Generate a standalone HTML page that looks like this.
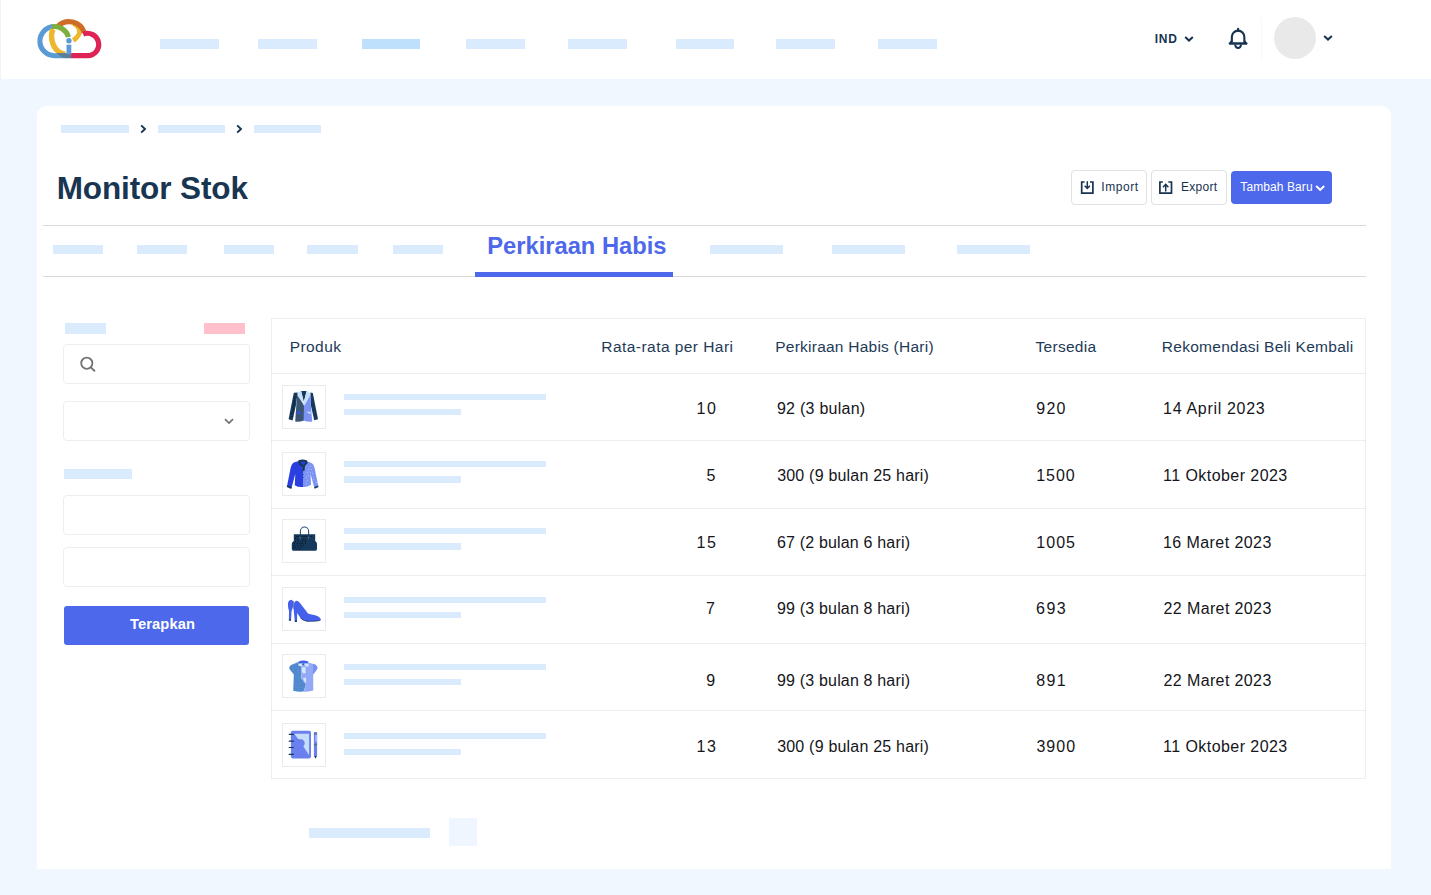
<!DOCTYPE html>
<html lang="id"><head><meta charset="utf-8"><title>Monitor Stok</title>
<style>
*{box-sizing:border-box;margin:0;padding:0}
html,body{width:1431px;height:895px;overflow:hidden}
body{background:#f0f7ff;font-family:"Liberation Sans",sans-serif;position:relative;color:#14141a}
.b{position:absolute}
.t{position:absolute;white-space:nowrap;line-height:1}
#hdr{position:absolute;left:0;top:0;width:1431px;height:79px;background:#fff;border-left:1px solid #f3f3f3}
#card{position:absolute;left:37px;top:106px;width:1354px;height:763px;background:#fff;border-radius:9px 9px 0 0}
.hl{position:absolute;height:1px;background:#d9d9d9}
.inp{position:absolute;border:1px solid #eeeeee;border-radius:4px;background:#fff}
.btn{position:absolute;border:1px solid #dfe1e4;border-radius:4px;background:#fff}
.th{color:#1d3a57;font-size:16px}
.td{color:#15151a;font-size:16px}
.thumb{position:absolute;width:44px;height:44px;border:1px solid #ebebeb;background:#fff}
.thumb svg{position:absolute;left:-1px;top:-1px}
</style></head><body>
<div id="hdr"></div>

<svg class="b" style="left:30px;top:10px" width="80" height="60" viewBox="0 0 80 60">
<g fill="none" stroke-width="5.1">
<path d="M22.72 16.61 A14.6 14.6 0 0 0 24.50 45.70 H36" stroke="#5b9bd5"/>
<path d="M22.9 19.2 C20.4 25 21 35 28 41.3 C30 43 32.5 44 36 44.4" stroke="#ecb72c" stroke-width="5.4"/>
<path d="M43.2 30.6 C47 28 50.6 23.5 49.3 19.5 C48.6 17.3 47 15.3 43.5 13.2" stroke="#ecb72c" stroke-width="4.9"/>
<path d="M27.59 16.59 A16.0 16.0 0 0 1 54.23 22.49" stroke="#cf6d28"/>
<path d="M21.96 16.72 A14.6 14.6 0 0 1 38.53 27.08" stroke="#7daf3f"/>
<path d="M53.12 24.19 A11.2 11.2 0 1 1 57.5 45.7 H41" stroke="#de2455" stroke-width="5.2"/>
</g>
<path d="M26 43.1 H41.3 V48.3 H36 L31.9 47.3 Z" fill="#5e7d99"/>
<circle cx="38.9" cy="30.8" r="3.8" fill="#fff"/>
<rect x="35.5" y="33.7" width="6.8" height="9.4" fill="#fff"/>
<circle cx="38.9" cy="30.8" r="2.7" fill="#5b9bd5"/>
<rect x="36.5" y="34.7" width="4.8" height="9.5" fill="#5b9bd5"/>
</svg>
<div class="b" style="left:160px;top:39px;width:58.8px;height:10.4px;background:#d9ebfd"></div>
<div class="b" style="left:258px;top:39px;width:58.8px;height:10.4px;background:#d9ebfd"></div>
<div class="b" style="left:361.5px;top:39px;width:58.8px;height:10.4px;background:#bfe0fc"></div>
<div class="b" style="left:466px;top:39px;width:58.8px;height:10.4px;background:#d9ebfd"></div>
<div class="b" style="left:568px;top:39px;width:58.8px;height:10.4px;background:#d9ebfd"></div>
<div class="b" style="left:675.5px;top:39px;width:58.8px;height:10.4px;background:#d9ebfd"></div>
<div class="b" style="left:776px;top:39px;width:58.8px;height:10.4px;background:#d9ebfd"></div>
<div class="b" style="left:878px;top:39px;width:58.8px;height:10.4px;background:#d9ebfd"></div>
<div class="t" style="left:1154.75px;top:33.00px;font-size:12px;font-weight:700;color:#173350;letter-spacing:0.712px">IND</div>
<svg class="b" style="left:1183px;top:34px" width="12" height="10" viewBox="0 0 12 10"><path d="M2.2 3 L6 6.6 L9.8 3" fill="none" stroke="#173350" stroke-width="2"/></svg>
<svg class="b" style="left:1226px;top:26px" width="24" height="26" viewBox="0 0 24 26"><g fill="none" stroke="#173350"><path d="M5.85 16.8 V10.9 A6.25 6.25 0 0 1 18.35 10.9 V16.8" stroke-width="2.1"/><path d="M5.6 15 L4.2 17.2 M18.6 15 L20 17.2" stroke-width="1.8"/><path d="M3.9 17.5 H20.3" stroke-width="2.4" stroke-linecap="round"/><path d="M12.1 2.9 V4.8" stroke-width="2.2" stroke-linecap="round"/><path d="M9.2 18.6 A2.9 3.4 0 0 0 15 18.6" stroke-width="2"/></g></svg>
<div class="b" style="left:1261px;top:18px;width:1px;height:42px;background:#f8f8f8"></div>
<div class="b" style="left:1274px;top:17px;width:42px;height:42px;border-radius:50%;background:#e9e9e9"></div>
<svg class="b" style="left:1322px;top:33px" width="12" height="10" viewBox="0 0 12 10"><path d="M2.2 3 L6 6.6 L9.8 3" fill="none" stroke="#173350" stroke-width="2"/></svg>
<div id="card"></div>
<div class="b" style="left:61px;top:124.7px;width:68px;height:8.5px;background:#d9ebfd"></div>
<div class="b" style="left:158px;top:124.7px;width:67px;height:8.5px;background:#d9ebfd"></div>
<div class="b" style="left:254px;top:124.7px;width:67px;height:8.5px;background:#d9ebfd"></div>
<svg class="b" style="left:139px;top:123px" width="9" height="12" viewBox="0 0 9 12"><path d="M2.2 2.4 L6 6 L2.2 9.6" fill="none" stroke="#173350" stroke-width="1.9"/></svg>
<svg class="b" style="left:235px;top:123px" width="9" height="12" viewBox="0 0 9 12"><path d="M2.2 2.4 L6 6 L2.2 9.6" fill="none" stroke="#173350" stroke-width="1.9"/></svg>
<div class="t" style="left:56.67px;top:173.00px;font-size:31.5px;font-weight:700;color:#183551;letter-spacing:-0.107px">Monitor Stok</div>
<div class="btn" style="left:1071px;top:170px;width:76px;height:35px"></div>
<div class="btn" style="left:1151px;top:170px;width:76px;height:35px"></div>
<div class="b" style="left:1231.3px;top:170.5px;width:100.7px;height:33.7px;border-radius:4px;background:#4d68eb"></div>
<svg class="b" style="left:1079px;top:179px" width="16" height="16" viewBox="0 0 16 16"><path d="M5.6 3 H2.7 V14.1 H13.9 V3 H11" fill="none" stroke="#173350" stroke-width="1.7"/><path d="M8.3 2.2 V9.4 M5.7 6.7 L8.3 9.4 L10.9 6.7" fill="none" stroke="#173350" stroke-width="1.5"/></svg>
<div class="t" style="left:1101.28px;top:181.00px;font-size:12px;color:#173350;letter-spacing:0.550px">Import</div>
<svg class="b" style="left:1158px;top:179px" width="16" height="16" viewBox="0 0 16 16"><path d="M4.8 3 H1.9 V14.2 H13.5 V3 H10.4" fill="none" stroke="#173350" stroke-width="1.7"/><path d="M7.7 12.6 V5.2 M5 8.2 L7.7 5.3 L10.4 8.2" fill="none" stroke="#173350" stroke-width="1.5"/></svg>
<div class="t" style="left:1180.90px;top:181.00px;font-size:12px;color:#173350;letter-spacing:0.315px">Export</div>
<div class="t" style="left:1240.35px;top:181.00px;font-size:12px;color:#fff;letter-spacing:0.085px">Tambah Baru</div>
<svg class="b" style="left:1314px;top:182.6px" width="12" height="10" viewBox="0 0 12 10"><path d="M2.2 3 L6.2 6.9 L10.2 3" fill="none" stroke="#fff" stroke-width="2"/></svg>
<div class="hl" style="left:43px;top:225px;width:1323px"></div>
<div class="hl" style="left:43px;top:276px;width:1323px"></div>
<div class="b" style="left:53px;top:245px;width:50px;height:9px;background:#d9ebfd"></div>
<div class="b" style="left:137px;top:245px;width:50px;height:9px;background:#d9ebfd"></div>
<div class="b" style="left:224px;top:245px;width:50px;height:9px;background:#d9ebfd"></div>
<div class="b" style="left:307px;top:245px;width:51px;height:9px;background:#d9ebfd"></div>
<div class="b" style="left:393px;top:245px;width:50px;height:9px;background:#d9ebfd"></div>
<div class="b" style="left:710px;top:245px;width:73px;height:9px;background:#d9ebfd"></div>
<div class="b" style="left:832px;top:245px;width:73px;height:9px;background:#d9ebfd"></div>
<div class="b" style="left:957px;top:245px;width:73px;height:9px;background:#d9ebfd"></div>
<div class="t" style="left:487.27px;top:235.00px;font-size:23.7px;font-weight:700;color:#4d68eb;letter-spacing:0.007px">Perkiraan Habis</div>
<div class="b" style="left:475px;top:272.4px;width:198px;height:4.4px;background:#4d68eb"></div>
<div class="b" style="left:65px;top:323px;width:41px;height:11px;background:#d9ebfd"></div>
<div class="b" style="left:204px;top:323px;width:41px;height:11px;background:#ffc0cb"></div>
<div class="inp" style="left:63px;top:344px;width:187px;height:40px"></div>
<svg class="b" style="left:78px;top:354px" width="20" height="20" viewBox="0 0 20 20"><circle cx="8.8" cy="9.2" r="5.6" fill="none" stroke="#707274" stroke-width="1.8"/><path d="M12.8 13.4 L16.4 16.8" stroke="#707274" stroke-width="1.9" stroke-linecap="round"/></svg>
<div class="inp" style="left:63px;top:401px;width:187px;height:40px"></div>
<svg class="b" style="left:222px;top:415px" width="14" height="12" viewBox="0 0 14 12"><path d="M3 4.2 L7 8 L11 4.2" fill="none" stroke="#707274" stroke-width="1.7"/></svg>
<div class="b" style="left:64px;top:469px;width:67.5px;height:10px;background:#d9ebfd"></div>
<div class="inp" style="left:63px;top:495px;width:187px;height:39.5px"></div>
<div class="inp" style="left:63px;top:547px;width:187px;height:39.5px"></div>
<div class="b" style="left:64px;top:606px;width:185px;height:39px;border-radius:3px;background:#4d68eb"></div>
<div class="t" style="left:129.88px;top:617.00px;font-size:14.7px;font-weight:700;color:#fff;letter-spacing:0.136px">Terapkan</div>
<div class="b" style="left:271px;top:318px;width:1095px;height:461px;border:1px solid rgba(0,0,0,.068);background:#fff"></div>
<div class="hl" style="left:271px;top:373px;width:1095px;background:rgba(0,0,0,.068)"></div>
<div class="hl" style="left:271px;top:440px;width:1095px;background:rgba(0,0,0,.068)"></div>
<div class="hl" style="left:271px;top:508px;width:1095px;background:rgba(0,0,0,.068)"></div>
<div class="hl" style="left:271px;top:575px;width:1095px;background:rgba(0,0,0,.068)"></div>
<div class="hl" style="left:271px;top:643px;width:1095px;background:rgba(0,0,0,.068)"></div>
<div class="hl" style="left:271px;top:710px;width:1095px;background:rgba(0,0,0,.068)"></div>
<div class="t" style="left:289.65px;top:339.00px;font-size:15.5px;color:#1d3a57;letter-spacing:0.445px">Produk</div>
<div class="t" style="left:601.35px;top:339.00px;font-size:15.5px;color:#1d3a57;letter-spacing:0.444px">Rata-rata per Hari</div>
<div class="t" style="left:775.25px;top:339.00px;font-size:15.5px;color:#1d3a57;letter-spacing:0.237px">Perkiraan Habis (Hari)</div>
<div class="t" style="left:1035.62px;top:339.00px;font-size:15.5px;color:#1d3a57;letter-spacing:0.264px">Tersedia</div>
<div class="t" style="left:1161.85px;top:339.00px;font-size:15.5px;color:#1d3a57;letter-spacing:0.266px">Rekomendasi Beli Kembali</div>
<div class="thumb" style="left:282px;top:385px"><svg viewBox="0 0 44 44" width="44" height="44"><path d="M11.8 7.8 L15.5 7.6 L14.2 19 L10.6 35.6 L6.6 34.3 Z" fill="#16395b"/><path d="M28.4 7.6 L30.8 8 L36 34.3 L32.2 35.2 L28.6 19 Z" fill="#16395b"/><path d="M15.3 8 L22 20.4 L22 35.4 Q17 37.4 13.2 36.6 L14.4 19 Z" fill="#3b5675"/><path d="M28.6 8 L22 20.4 L21.6 35.4 Q26 37.4 30.2 36.6 L28.8 19 Z" fill="#7b93f5"/><path d="M19 6 H24.8 L21.8 16.5 Z" fill="#16395b"/><path d="M16 7 L19.2 5.8 L22.4 20.8 L15.6 10.8 Z" fill="#c5e0fb"/><path d="M27.4 7 L24.6 5.8 L21.8 17.6 L22.4 20.8 L28 10.8 Z" fill="#c5e0fb"/><rect x="14.8" y="26.8" width="4" height="1.9" fill="#3050f0"/><path d="M24.2 26.8 H28.7 V28.9 Q26 28.7 24.2 26.8Z" fill="#c5e0fb"/><g fill="#050a14"><circle cx="12.3" cy="12.2" r=".5"/><circle cx="12.4" cy="15.3" r=".5"/><circle cx="12.2" cy="17.6" r=".5"/><circle cx="11.9" cy="19.6" r=".5"/><circle cx="11.4" cy="21.5" r=".5"/><circle cx="11.2" cy="24.3" r=".5"/><circle cx="10.4" cy="26.4" r=".5"/><circle cx="9.3" cy="28.4" r=".5"/><circle cx="10.2" cy="31.4" r=".5"/></g></svg></div>
<div class="b" style="left:344px;top:393.7px;width:202px;height:6.2px;background:#d9ebfd"></div>
<div class="b" style="left:344px;top:409.2px;width:117px;height:6.3px;background:#d9ebfd"></div>
<div class="t" style="left:696.55px;top:401.00px;font-size:16px;color:#15151a;letter-spacing:1.525px">10</div>
<div class="t" style="left:776.95px;top:401.00px;font-size:16px;color:#15151a;letter-spacing:0.261px">92 (3 bulan)</div>
<div class="t" style="left:1036.25px;top:401.00px;font-size:16px;color:#15151a;letter-spacing:1.263px">920</div>
<div class="t" style="left:1163.05px;top:401.00px;font-size:16px;color:#15151a;letter-spacing:0.683px">14 April 2023</div>
<div class="thumb" style="left:282px;top:452px"><svg viewBox="0 0 44 44" width="44" height="44"><path d="M16.5 9 L11.3 10.8 Q9.5 12 8.6 16 L5 34.2 L9.4 36.2 L13.3 22 L12.8 33.2 Q16 35.4 21 35 L21 16 Z" fill="#2b3fe0"/><path d="M24.4 9 L30 11.2 Q31.8 12.5 32.6 16 L36.3 34.2 L32.4 35.9 L28.5 22 L29 32.8 Q25 35.4 21 35 L21 16 Z" fill="#7d93f3"/><path d="M16.4 8.2 Q20.5 6.6 24.8 8.2 L25.8 11 L23 14 L22.6 18.4 L20.6 19.4 L20.5 15.5 L16.8 12.5 Z" fill="#16395b"/><path d="M18.2 9.8 H23.4 L21.6 13.6 Z" fill="#2b3fe0"/><path d="M5.2 33.2 L9.8 35.2 L9.2 36.9 L4.8 34.9 Z" fill="#16395b"/><path d="M32.2 35 L36 33.6 L36.6 35.1 L32.7 36.7 Z" fill="#16395b"/><g fill="#c3d2fa"><circle cx="28.3" cy="14.3" r=".5"/><circle cx="26.3" cy="17.3" r=".5"/><circle cx="29.3" cy="17.3" r=".5"/><circle cx="25.3" cy="20.3" r=".5"/><circle cx="28.3" cy="20.3" r=".5"/><circle cx="30.3" cy="21.3" r=".5"/><circle cx="26.3" cy="23.3" r=".5"/><circle cx="24.3" cy="25.3" r=".5"/><circle cx="25.3" cy="28.3" r=".5"/><circle cx="31.3" cy="27.3" r=".5"/><circle cx="24.3" cy="31.3" r=".5"/><circle cx="34.2" cy="30.3" r=".5"/></g><g fill="#3b5675"><circle cx="21.3" cy="22.4" r=".5"/><circle cx="21.3" cy="25.4" r=".5"/></g></svg></div>
<div class="b" style="left:344px;top:461px;width:202px;height:6.2px;background:#d9ebfd"></div>
<div class="b" style="left:344px;top:476.3px;width:117px;height:6.3px;background:#d9ebfd"></div>
<div class="t" style="left:706.38px;top:468.00px;font-size:16px;color:#15151a;letter-spacing:0.000px">5</div>
<div class="t" style="left:777.17px;top:468.00px;font-size:16px;color:#15151a;letter-spacing:0.205px">300 (9 bulan 25 hari)</div>
<div class="t" style="left:1036.25px;top:468.00px;font-size:16px;color:#15151a;letter-spacing:0.917px">1500</div>
<div class="t" style="left:1163.05px;top:468.00px;font-size:16px;color:#15151a;letter-spacing:0.441px">11 Oktober 2023</div>
<div class="thumb" style="left:282px;top:519px"><svg viewBox="0 0 44 44" width="44" height="44"><path d="M18.4 16 V12.3 A4.1 4.3 0 0 1 26.6 12.3 V16" fill="none" stroke="#2d5079" stroke-width="1.1"/><path d="M11.8 15.3 H33.2 V22 Q35 23 35 25 V30 Q35 31.7 33.4 31.7 H11.4 Q9.8 31.7 9.8 30 V25 Q9.8 23 11.8 22 Z" fill="#16395b"/><path d="M17 18.5 L18.6 17.4 V20.8 Z M27.6 18.8 L26 17.6 V20.6 Z" fill="#4d6a8c"/><g fill="#03060c"><rect x="13.85" y="16.85" width=".9" height=".9"/><rect x="15.85" y="16.85" width=".9" height=".9"/><rect x="19.85" y="16.85" width=".9" height=".9"/><rect x="21.85" y="16.85" width=".9" height=".9"/><rect x="23.85" y="16.85" width=".9" height=".9"/><rect x="28.85" y="16.85" width=".9" height=".9"/><rect x="12.85" y="18.85" width=".9" height=".9"/><rect x="14.85" y="19.85" width=".9" height=".9"/><rect x="20.85" y="19.85" width=".9" height=".9"/><rect x="22.85" y="19.85" width=".9" height=".9"/><rect x="12.85" y="21.85" width=".9" height=".9"/><rect x="15.85" y="21.85" width=".9" height=".9"/><rect x="19.85" y="21.85" width=".9" height=".9"/><rect x="22.85" y="21.85" width=".9" height=".9"/><rect x="11.85" y="23.85" width=".9" height=".9"/><rect x="14.85" y="23.85" width=".9" height=".9"/><rect x="17.85" y="23.85" width=".9" height=".9"/><rect x="19.85" y="23.85" width=".9" height=".9"/><rect x="22.85" y="23.85" width=".9" height=".9"/><rect x="11.85" y="25.85" width=".9" height=".9"/><rect x="14.85" y="25.85" width=".9" height=".9"/><rect x="17.85" y="25.85" width=".9" height=".9"/><rect x="20.85" y="25.85" width=".9" height=".9"/><rect x="10.85" y="27.85" width=".9" height=".9"/><rect x="12.85" y="27.85" width=".9" height=".9"/><rect x="15.85" y="27.85" width=".9" height=".9"/><rect x="18.85" y="27.85" width=".9" height=".9"/><rect x="13.85" y="29.85" width=".9" height=".9"/><rect x="16.85" y="29.85" width=".9" height=".9"/></g></svg></div>
<div class="b" style="left:344px;top:528.3px;width:202px;height:6.2px;background:#d9ebfd"></div>
<div class="b" style="left:344px;top:543.3px;width:117px;height:6.3px;background:#d9ebfd"></div>
<div class="t" style="left:696.55px;top:535.00px;font-size:16px;color:#15151a;letter-spacing:1.525px">15</div>
<div class="t" style="left:776.92px;top:535.00px;font-size:16px;color:#15151a;letter-spacing:0.178px">67 (2 bulan 6 hari)</div>
<div class="t" style="left:1036.25px;top:535.00px;font-size:16px;color:#15151a;letter-spacing:1.058px">1005</div>
<div class="t" style="left:1163.05px;top:535.00px;font-size:16px;color:#15151a;letter-spacing:0.421px">16 Maret 2023</div>
<div class="thumb" style="left:282px;top:587px"><svg viewBox="0 0 44 44" width="44" height="44"><g fill="#4560ea"><path d="M9.2 12.8 Q6.2 13.2 5.9 17 Q6 21 7 24 L6.9 32.4 L9 33.4 L9.6 24 Q11.5 20 11.4 15 Q10.8 13 9.2 12.8 Z"/><path d="M14 13.8 Q16 13.6 18 16 L26 26.6 Q28 27.6 32 28 Q38 29.4 38.8 32.6 Q38 34.2 33 34.2 L25 34.4 Q21 33.6 18.8 31.4 L15.2 26 L15 34.6 L12.8 34.6 L11.6 22 Q10.8 16 14 13.8 Z"/></g><path d="M18.6 31 Q21 33.6 25 34.3 L33 34.1 Q38 34.1 38.8 32.8" fill="none" stroke="#16395b" stroke-width=".7"/><rect x="6.9" y="32.2" width="2.1" height="1.5" fill="#16395b"/><rect x="12.8" y="33.4" width="2.2" height="1.5" fill="#16395b"/><path d="M11.4 14 L12 22" stroke="#33509a" stroke-width=".6"/></svg></div>
<div class="b" style="left:344px;top:596.5px;width:202px;height:6.2px;background:#d9ebfd"></div>
<div class="b" style="left:344px;top:612px;width:117px;height:6.3px;background:#d9ebfd"></div>
<div class="t" style="left:706.12px;top:601.00px;font-size:16px;color:#15151a;letter-spacing:0.000px">7</div>
<div class="t" style="left:777.05px;top:601.00px;font-size:16px;color:#15151a;letter-spacing:0.171px">99 (3 bulan 8 hari)</div>
<div class="t" style="left:1036.12px;top:601.00px;font-size:16px;color:#15151a;letter-spacing:1.388px">693</div>
<div class="t" style="left:1163.55px;top:601.00px;font-size:16px;color:#15151a;letter-spacing:0.379px">22 Maret 2023</div>
<div class="thumb" style="left:282px;top:654px"><svg viewBox="0 0 44 44" width="44" height="44"><defs><pattern id="sp" width="2.4" height="2.4" patternUnits="userSpaceOnUse"><rect width="2.4" height="2.4" fill="#4f8fd0"/><circle cx=".7" cy=".7" r=".42" fill="#4a5fe6"/><circle cx="1.9" cy="1.9" r=".38" fill="#8c8f86"/></pattern></defs><path d="M16.4 8 L9 11 Q6.6 12.6 7.4 15 L11.8 20.6 L11.2 36.8 Q16 38 21.6 37.5 L24 30.2 L19.4 24.6 V9 Z" fill="url(#sp)"/><path d="M19.4 9 L26.6 8.4 L33 10.6 Q36 12.4 35.2 15 L31.2 20.6 L31.3 36.6 Q27 38 21.6 37.5 L24 30.2 L19.4 24.6 Z" fill="#93a9f5"/><path d="M31 10 L33 10.6 Q36 12.4 35.2 15 L31.2 20.6 Z" fill="#7a90f0"/><path d="M16.6 7.4 Q21 5.8 26.4 7.4 L26 9.2 H17 Z" fill="#4560ea"/><path d="M16.4 9.4 L20.2 9.8 L19.4 12.6 L16.6 11.8 Z" fill="#d3e6fd"/><path d="M22.4 9.8 L26.8 9.4 L26.6 12.4 L23.6 12.4 Z" fill="#d3e6fd"/><path d="M20 13.4 L23.4 13 L23.8 19 L21.5 19.5 L20 18 Z" fill="#d3e6fd"/><path d="M21 24 L24 23.4 L24.2 29 L22.4 27.6 Z" fill="#d3e6fd"/><circle cx="21.2" cy="10.2" r=".7" fill="#16395b"/></svg></div>
<div class="b" style="left:344px;top:663.6px;width:202px;height:6.2px;background:#d9ebfd"></div>
<div class="b" style="left:344px;top:678.8px;width:117px;height:6.3px;background:#d9ebfd"></div>
<div class="t" style="left:706.25px;top:673.00px;font-size:16px;color:#15151a;letter-spacing:0.000px">9</div>
<div class="t" style="left:777.05px;top:673.00px;font-size:16px;color:#15151a;letter-spacing:0.171px">99 (3 bulan 8 hari)</div>
<div class="t" style="left:1036.25px;top:673.00px;font-size:16px;color:#15151a;letter-spacing:1.388px">891</div>
<div class="t" style="left:1163.55px;top:673.00px;font-size:16px;color:#15151a;letter-spacing:0.379px">22 Maret 2023</div>
<div class="thumb" style="left:282px;top:723px"><svg viewBox="0 0 44 44" width="44" height="44"><rect x="8.9" y="7.8" width="20.1" height="27.6" rx="1.8" fill="#6a80ee"/><path d="M12.3 10.7 H27.1 V32.2 L21.4 23.6 Q24.6 19.6 20.4 16.6 L16.1 16.1 Z" fill="#c5ddfb"/><g stroke="#16395b" stroke-width="1.2" stroke-linecap="round"><path d="M7.2 11.3 H11.4"/><path d="M7.2 18.2 H11.4"/><path d="M7.2 24.5 H11.4"/><path d="M7.2 31.4 H11.4"/></g><rect x="31.9" y="9" width="3.2" height="24.4" rx="1" fill="#6a80ee"/><rect x="33.3" y="11.6" width="1.9" height="7.2" fill="#a9b9f7"/><rect x="31.9" y="10.2" width="3.2" height="1.3" fill="#5a7490"/><rect x="31.9" y="20.9" width="3.2" height="1.7" fill="#5a7490"/><path d="M32.2 33 H34.9 L33.4 35.8 Z" fill="#16395b"/><g fill="#5a6fe8"><circle cx="16.3" cy="25.3" r=".5"/><circle cx="16.3" cy="31.3" r=".5"/><circle cx="20.3" cy="33.3" r=".5"/></g></svg></div>
<div class="b" style="left:344px;top:733.3px;width:202px;height:6.2px;background:#d9ebfd"></div>
<div class="b" style="left:344px;top:748.5px;width:117px;height:6.3px;background:#d9ebfd"></div>
<div class="t" style="left:696.55px;top:739.00px;font-size:16px;color:#15151a;letter-spacing:1.525px">13</div>
<div class="t" style="left:777.17px;top:739.00px;font-size:16px;color:#15151a;letter-spacing:0.205px">300 (9 bulan 25 hari)</div>
<div class="t" style="left:1036.38px;top:739.00px;font-size:16px;color:#15151a;letter-spacing:1.042px">3900</div>
<div class="t" style="left:1163.05px;top:739.00px;font-size:16px;color:#15151a;letter-spacing:0.441px">11 Oktober 2023</div>
<div class="b" style="left:309px;top:827.5px;width:121px;height:10.5px;background:#d9ebfd"></div>
<div class="b" style="left:449px;top:818.3px;width:27.7px;height:27.5px;background:#eff6ff"></div>
</body></html>
